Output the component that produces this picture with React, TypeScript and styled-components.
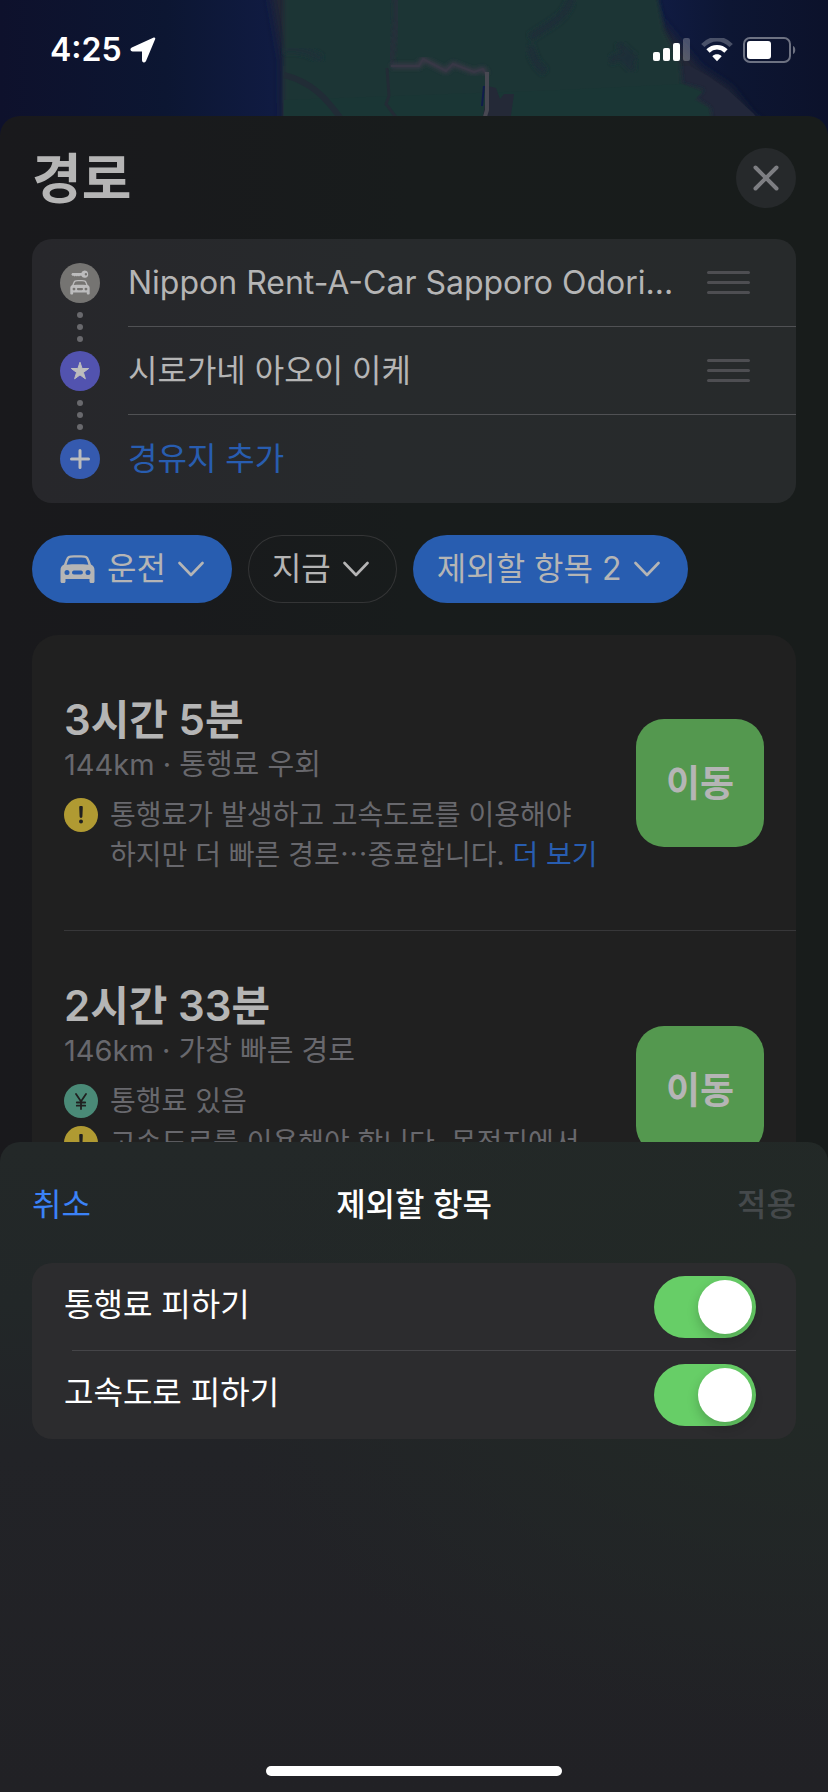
import React, { useId, useState } from "react";
import styled, { createGlobalStyle } from "styled-components";

const GlobalStyle = createGlobalStyle`
  *, *::before, *::after { box-sizing: border-box; }
  html, body { margin: 0; background: #19191c; }
  body, button, input {
    font-family: Inter, "Noto Sans CJK KR", sans-serif;
    -webkit-font-smoothing: antialiased;
  }
  h1, h2, h3, p, ul, ol { margin: 0; padding: 0; }
  ul, ol { list-style: none; }
  button { border: 0; padding: 0; background: none; color: inherit; cursor: pointer; }
`;

const Screen = styled.div`
  position: relative;
  display: flex;
  flex-direction: column;
  height: 100vh;
  min-height: 1200px;
  overflow: hidden;
  background: #0d132e;
`;

const MapLayer = styled.div`
  position: absolute;
  inset: 0 0 auto 0;
  height: 150px;
  svg { display: block; width: 100%; height: 100%; }
`;

const StatusBar = styled.header`
  position: relative;
  flex: none;
  display: flex;
  align-items: center;
  justify-content: space-between;
  height: 116px;
  padding: 0 32px 16px 50px;
  color: #fff;
`;

const Clock = styled.div`
  display: flex;
  align-items: center;
  gap: 8px;
  font-size: 32px;
  font-weight: 600;
  line-height: 40px;
`;

const StatusIcons = styled.div`
  display: flex;
  align-items: center;
  gap: 10px;
`;

const RouteSheet = styled.main`
  position: relative;
  flex: 1;
  display: flex;
  flex-direction: column;
  min-height: 0;
  overflow: hidden;
  padding: 0 32px;
  border-radius: 20px 20px 0 0;
  background: linear-gradient(90deg, #19191c 0%, #191a1c 20%, #181c1c 50%, #181c1b 100%);
`;

const SheetHead = styled.div`
  flex: none;
  display: flex;
  align-items: center;
  justify-content: space-between;
  height: 123px;
`;

const PageTitle = styled.h1`
  padding-top: 4px;
  color: #b5b5b5;
  font-size: 54px;
  font-weight: 700;
  line-height: 64px;
`;

const CloseButton = styled.button`
  display: grid;
  place-items: center;
  width: 60px;
  height: 60px;
  border-radius: 50%;
  background: #26292b;
  color: #7d7e82;
`;

const StopList = styled.ol`
  flex: none;
  overflow: hidden;
  border-radius: 20px;
  background: linear-gradient(90deg, #27272b 0%, #272a2c 45%, #272a2b 100%);
`;

const StopRow = styled.li`
  display: flex;
  align-items: center;
  height: 88px;
  padding-left: 28px;
`;

const StopMarker = styled.div`
  position: relative;
  flex: none;
  display: grid;
  place-items: center;
  width: 40px;
  height: 40px;
  margin-right: 28px;
`;

const StopDisc = styled.div<{ $fill: string }>`
  display: grid;
  place-items: center;
  width: 40px;
  height: 40px;
  border-radius: 50%;
  background: ${(p) => p.$fill};
  color: #bcbcbd;
`;

const Dots = styled.div`
  position: absolute;
  top: 49px;
  left: 17px;
  display: grid;
  gap: 6px;
  span { width: 6px; height: 6px; border-radius: 50%; background: #69696d; }
`;

const StopBody = styled.div<{ $divided: boolean }>`
  flex: 1;
  min-width: 0;
  display: flex;
  align-items: center;
  height: 88px;
  gap: 28px;
  padding-right: 46px;
  border-bottom: ${(p) => (p.$divided ? "1px solid #505154" : "0")};
`;

const StopName = styled.span`
  flex: 1;
  min-width: 0;
  overflow: hidden;
  white-space: nowrap;
  text-overflow: ellipsis;
  color: #b5b5b5;
  font-size: 32px;
  line-height: 44px;
`;

const AddStop = styled.button`
  color: #285db0;
  font-size: 32px;
  line-height: 44px;
`;

const DragHandle = styled.button`
  flex: none;
  display: grid;
  gap: 7px;
  width: 43px;
  span { height: 3px; border-radius: 2px; background: #4e4e52; }
`;

const Chips = styled.div`
  flex: none;
  display: flex;
  gap: 16px;
  padding: 32px 0;
`;

const Chip = styled.button<{ $filled?: boolean; $icon?: boolean }>`
  display: flex;
  align-items: center;
  gap: 12px;
  height: 68px;
  padding: 0 28px 0 ${(p) => (p.$icon ? 28 : 24)}px;
  border-radius: 34px;
  background: ${(p) => (p.$filled ? "#285db0" : "transparent")};
  box-shadow: ${(p) => (p.$filled ? "none" : "inset 0 0 0 1px #343536")};
  color: #b5b5b5;
  font-size: 32px;
  line-height: 44px;
  white-space: nowrap;
`;

const RouteList = styled.ul`
  flex: none;
  border-radius: 26px;
  background: #202020;
`;

const RouteRow = styled.li`
  margin-left: 32px;
  min-height: 295px;
  display: flex;
  align-items: center;
  gap: 20px;
  padding: 46px 32px 46px 0;
  & + & { border-top: 1px solid #373739; }
`;

const RouteInfo = styled.div`
  flex: 1;
  min-width: 0;
  padding-top: 4px;
`;

const Duration = styled.h2`
  color: #b5b5b5;
  font-size: 42px;
  font-weight: 600;
  line-height: 50px;
`;

const Summary = styled.p`
  color: #68686d;
  font-size: 29px;
  line-height: 40px;
`;

const Notices = styled.ul`
  display: grid;
  gap: 2px;
  padding-top: 10px;
`;

const Notice = styled.li`
  display: flex;
  gap: 12px;
  color: #68686d;
  font-size: 28px;
  line-height: 40px;
  word-break: keep-all;
`;

const NoticeText = styled.p`
  white-space: pre-line;
`;

const NoticeDisc = styled.span<{ $fill: string }>`
  flex: none;
  display: grid;
  place-items: center;
  width: 34px;
  height: 34px;
  margin-top: 3px;
  border-radius: 50%;
  background: ${(p) => p.$fill};
`;

const MoreLink = styled.a`
  color: #285db0;
  text-decoration: none;
`;

const GoButton = styled.button`
  flex: none;
  width: 128px;
  height: 128px;
  padding-bottom: 4px;
  border-radius: 28px;
  background: #54984f;
  color: #b5b5b5;
  font-size: 37px;
  font-weight: 700;
`;

const OptionsSheet = styled.section`
  position: absolute;
  inset: auto 0 0 0;
  display: flex;
  flex-direction: column;
  min-height: 650px;
  padding: 0 32px 16px;
  border-radius: 20px 20px 0 0;
  background:
    radial-gradient(ellipse 75% 60% at 100% 30%, rgba(34, 41, 38, 1) 20%, rgba(34, 38, 40, 0) 100%),
    linear-gradient(180deg, #232828 0%, #222728 25%, #222327 48%, #212125 100%);
`;

const OptionsHead = styled.div`
  display: grid;
  grid-template-columns: 1fr auto 1fr;
  align-items: center;
  height: 121px;
  padding-top: 4px;
`;

const OptionsTitle = styled.h2`
  color: #fff;
  font-size: 32px;
  font-weight: 500;
  line-height: 44px;
`;

const HeadAction = styled.button<{ $end?: boolean }>`
  justify-self: ${(p) => (p.$end ? "end" : "start")};
  color: #3b82f7;
  font-size: 32px;
  line-height: 44px;
  &:disabled { color: #45494b; font-weight: 500; cursor: default; }
`;

const OptionList = styled.div`
  overflow: hidden;
  border-radius: 20px;
  background: #2c2c2e;
`;

const OptionRow = styled.div`
  position: relative;
  display: flex;
  align-items: center;
  justify-content: space-between;
  height: 88px;
  padding: 0 40px 0 32px;
  & + &::before {
    content: "";
    position: absolute;
    inset: -1px 0 auto 40px;
    height: 1px;
    background: #454548;
  }
`;

const OptionLabel = styled.label`
  padding-bottom: 4px;
  color: #fff;
  font-size: 32px;
  line-height: 44px;
`;

const Switch = styled.input`
  appearance: none;
  display: flex;
  align-items: center;
  width: 102px;
  height: 62px;
  margin: 0;
  padding: 4px;
  border-radius: 31px;
  background: #39393d;
  cursor: pointer;
  &::before {
    content: "";
    width: 54px;
    height: 54px;
    border-radius: 50%;
    background: #fff;
    box-shadow: 0 5px 12px rgba(0, 0, 0, 0.2);
  }
  &:checked { justify-content: flex-end; background: #67ce67; }
`;

const HomeBar = styled.div`
  align-self: center;
  width: 296px;
  height: 10px;
  margin-top: auto;
  border-radius: 5px;
  background: #fff;
`;

const MapArt = () => (
  <svg viewBox="0 0 828 150" preserveAspectRatio="xMidYMin slice" aria-hidden="true">
    <defs>
      <linearGradient id="sea" x1="0" x2="1" y1="0" y2="0">
        <stop offset="0" stopColor="#0e112c" />
        <stop offset="0.2" stopColor="#0c1632" />
        <stop offset="0.33" stopColor="#101b42" />
        <stop offset="0.8" stopColor="#101b42" />
        <stop offset="0.88" stopColor="#0d1633" />
        <stop offset="1" stopColor="#0c122b" />
      </linearGradient>
      <filter id="soft" x="-10%" y="-10%" width="120%" height="120%"><feGaussianBlur stdDeviation="5" /></filter>
      <filter id="soft2"><feGaussianBlur stdDeviation="2" /></filter>
    </defs>
    <rect width="828" height="150" fill="url(#sea)" />
    <path d="M268-20 282 60 283 150H800L752 116 730 88 700 68 660 20 645-20Z" fill="#222636" filter="url(#soft)" />
    <path d="M283 66V150H775L754 114 728 90 708 76 690 66Z" fill="#22273a" />
    <path d="M284-20V150H716L710 108 695 98 704 90 682 84 680 62 664 30 655-20Z" fill="#1a3635" filter="url(#soft2)" />
    <path d="M284 100V150H716L708 108 694 100 702 92 682 84 560 90Z" fill="#1a3635" />
    <path d="M284 75C312 82 326 98 342 120" fill="none" stroke="#212c36" strokeWidth="6" />
    <path d="M284 50C300 48 312 52 322 60" fill="none" stroke="#1e3038" strokeWidth="8" filter="url(#soft2)" />
    <path d="M530 46C534 60 536 64 545 72M530 38C548 24 566 20 572-4" fill="none" stroke="#1f2f37" strokeWidth="8" filter="url(#soft2)" />
    <path d="M610 62C620 52 622 58 634 70M618 44 636 60" fill="none" stroke="#1f2e37" strokeWidth="8" filter="url(#soft2)" />
    <path d="M396-4C400 20 392 42 391 66" fill="none" stroke="#252e3a" strokeWidth="6" filter="url(#soft2)" />
    <path d="M488 86 496 88 500 99 504 94 514 94 510 122H482Z" fill="#242937" />
    <path d="M387 68 389 96 386 104 398 120" fill="none" stroke="#232c36" strokeWidth="3" />
    <path d="M391 66H419L423 59 446 71 453 64 474 72 483 69 487 74" fill="none" stroke="#3a3947" strokeWidth="5" strokeLinejoin="round" filter="url(#soft2)" />
    <path d="M391 66H419L423 59 446 71 453 64 474 72 483 69 487 76" fill="none" stroke="#383846" strokeWidth="2" strokeLinejoin="round" />
    <path d="M487 72V110L484 120" fill="none" stroke="#484852" strokeWidth="4" />
    <path d="M484 86 482 106" stroke="#101c4c" strokeWidth="2" />
  </svg>
);

const LocationArrow = () => (
  <svg width="26" height="26" viewBox="0 0 26 26" aria-hidden="true">
    <path d="M24.200 1.600 15 23.600c-.5 1.200-1.900.9-1.900-.4V13.400H2.600c-1.300 0-1.500-1.400-.3-2L24.200 1.600Z" fill="#fff" stroke="#fff" strokeWidth="2.200" strokeLinejoin="round" />
  </svg>
);

const Signal = () => (
  <svg width="38" height="24" viewBox="0 0 38 24" aria-hidden="true">
    <rect x="0" y="14" width="7" height="9" rx="2" fill="#fff" />
    <rect x="10" y="10" width="7" height="13" rx="2" fill="#fff" />
    <rect x="20" y="5" width="7" height="18" rx="2" fill="#fff" />
    <rect x="30" y="0" width="7" height="23" rx="2" fill="#fff" opacity="0.250" />
  </svg>
);

const Wifi = () => (
  <svg width="32" height="24" viewBox="0 0 32 24" aria-hidden="true" fill="none">
    <path d="M1.800 7.500C10-1 22-1 30.200 7.500" stroke="#fff" strokeOpacity="0.250" strokeWidth="4.600" />
    <path d="M7 13C12 8 20 8 25 13" stroke="#fff" strokeWidth="4.600" />
    <path d="M11.300 18.200C14 15.700 18 15.700 20.700 18.200L16 23.200Z" fill="#fff" />
  </svg>
);

const Battery = () => (
  <svg width="53" height="26" viewBox="0 0 53 26" aria-hidden="true">
    <rect x="1" y="1" width="46" height="24" rx="6" fill="none" stroke="#fff" strokeOpacity="0.400" strokeWidth="2" />
    <rect x="4" y="4" width="24" height="18" rx="3" fill="#fff" />
    <path d="M50 9c3 1 3 7 0 8Z" fill="#fff" opacity="0.400" />
  </svg>
);

const CloseIcon = () => (
  <svg width="26" height="26" viewBox="0 0 26 26" aria-hidden="true">
    <path d="M2.500 2.500 23.500 23.500M23.500 2.500 2.500 23.500" stroke="currentColor" strokeWidth="4" strokeLinecap="round" />
  </svg>
);

const CarBody = () => (
  <path
    fillRule="evenodd"
    d="M6.800 2.600C7.600 1.200 8.800.6 10.500.5 15 .1 20 .1 24.500.5 26.200.6 27.400 1.200 28.200 2.600 29.200 4.600 30.200 7 31 9.600 33.400 10.600 34.500 12.400 34.500 15.500V26.600c0 .9-.6 1.500-1.500 1.500h-2c-.9 0-1.500-.6-1.500-1.500V24H5.500V26.600c0 .9-.6 1.500-1.500 1.500H2C1.100 28.100.5 27.500.5 26.600V15.500C.5 12.400 1.600 10.600 4 9.600 4.800 7 5.800 4.600 6.800 2.600ZM6.600 9.800C13 9.200 22 9.200 28.400 9.800 27.800 7.600 27.200 5.800 26.400 4.200 26 3.300 25.400 2.900 24.400 2.800 20 2.400 15 2.400 10.600 2.800 9.600 2.900 9 3.300 8.600 4.200 7.800 5.800 7.200 7.600 6.600 9.800ZM7 15a2.500 2.500 0 1 0 0 5 2.500 2.500 0 0 0 0-5ZM28 15a2.500 2.500 0 1 0 0 5 2.500 2.500 0 0 0 0-5ZM14 15.500c-2.600 0-2.600 4 0 4h7c2.600 0 2.600-4 0-4Z"
    fill="currentColor"
  />
);

const CarIcon = () => (
  <svg width="35" height="29" viewBox="0 0 35 29" aria-hidden="true">
    <CarBody />
  </svg>
);

const RentalCarIcon = () => (
  <svg width="22" height="26" viewBox="0 0 22 26" aria-hidden="true">
    <g transform="translate(1 10) scale(0.570 0.520)"><CarBody /></g>
    <path fillRule="evenodd" d="M15.500.6a3.600 3.600 0 1 1-3.200 5.100H11l-1 .9-1.100-.9-1 .9-1.100-.9-1 .9L4.600 5.700H3.200L2.300 4.300 3.300 3h9A3.600 3.600 0 0 1 15.500.6Zm1.400 2.500a1.200 1.200 0 1 0 0 2.400 1.200 1.200 0 0 0 0-2.400Z" fill="currentColor" />
  </svg>
);

const StarIcon = () => (
  <svg width="20" height="20" viewBox="0 0 20 20" aria-hidden="true">
    <path d="M10 1.200 12.100 7.500H18.700L13.400 11.400 15.400 17.800 10 13.900 4.600 17.800 6.600 11.400 1.300 7.500H7.900Z" fill="currentColor" stroke="currentColor" strokeLinejoin="round" />
  </svg>
);

const PlusIcon = () => (
  <svg width="20" height="20" viewBox="0 0 20 20" aria-hidden="true">
    <path d="M10 1.500V18.500M1.500 10H18.500" stroke="currentColor" strokeWidth="3" strokeLinecap="round" />
  </svg>
);

const Chevron = () => (
  <svg width="26" height="16" viewBox="0 0 26 16" aria-hidden="true">
    <path d="M1.500 2 13 14 24.500 2" fill="none" stroke="currentColor" strokeWidth="2.600" strokeLinecap="round" strokeLinejoin="round" />
  </svg>
);

const AlertGlyph = () => (
  <svg width="6" height="18" viewBox="0 0 6 18" aria-hidden="true">
    <path d="M1.200 1.500a1.800 1.800 0 0 1 3.600 0L4.400 10.500a1.400 1.400 0 0 1-2.800 0Z" fill="#202020" />
    <circle cx="3" cy="15.600" r="2" fill="#202020" />
  </svg>
);

const YenGlyph = () => (
  <svg width="14" height="17" viewBox="0 0 14 17" aria-hidden="true">
    <path d="M2 1 7 8.500 12 1M7 8.500V16M2.800 9.500H11.200M2.800 12.700H11.200" fill="none" stroke="#202020" strokeWidth="1.800" strokeLinecap="round" />
  </svg>
);

const Handle = () => (
  <DragHandle type="button" aria-label="순서 변경">
    <span />
    <span />
    <span />
  </DragHandle>
);

const Connector = () => (
  <Dots aria-hidden="true">
    <span />
    <span />
    <span />
  </Dots>
);

function OptionSwitch({ label }: { label: string }) {
  const id = useId();
  const [on, setOn] = useState(true);
  return (
    <OptionRow>
      <OptionLabel htmlFor={id}>{label}</OptionLabel>
      <Switch id={id} type="checkbox" role="switch" checked={on} onChange={(e) => setOn(e.target.checked)} />
    </OptionRow>
  );
}

export default function App() {
  return (
    <Screen>
      <GlobalStyle />
      <MapLayer>
        <MapArt />
      </MapLayer>
      <StatusBar>
        <Clock>
          4:25
          <LocationArrow />
        </Clock>
        <StatusIcons>
          <Signal />
          <Wifi />
          <Battery />
        </StatusIcons>
      </StatusBar>

      <RouteSheet>
        <SheetHead>
          <PageTitle>경로</PageTitle>
          <CloseButton type="button" aria-label="닫기">
            <CloseIcon />
          </CloseButton>
        </SheetHead>

        <StopList>
          <StopRow>
            <StopMarker>
              <StopDisc $fill="#757472"><RentalCarIcon /></StopDisc>
              <Connector />
            </StopMarker>
            <StopBody $divided>
              <StopName>Nippon Rent-A-Car Sapporo Odori...</StopName>
              <Handle />
            </StopBody>
          </StopRow>
          <StopRow>
            <StopMarker>
              <StopDisc $fill="#5253af"><StarIcon /></StopDisc>
              <Connector />
            </StopMarker>
            <StopBody $divided>
              <StopName>시로가네 아오이 이케</StopName>
              <Handle />
            </StopBody>
          </StopRow>
          <StopRow>
            <StopMarker>
              <StopDisc $fill="#355aaf"><PlusIcon /></StopDisc>
            </StopMarker>
            <StopBody $divided={false}>
              <AddStop type="button">경유지 추가</AddStop>
            </StopBody>
          </StopRow>
        </StopList>

        <Chips>
          <Chip type="button" $filled $icon aria-haspopup="menu">
            <CarIcon />
            운전
            <Chevron />
          </Chip>
          <Chip type="button" aria-haspopup="menu">
            지금
            <Chevron />
          </Chip>
          <Chip type="button" $filled aria-haspopup="dialog">
            제외할 항목 2
            <Chevron />
          </Chip>
        </Chips>

        <RouteList>
          <RouteRow>
            <RouteInfo>
              <Duration>3시간 5분</Duration>
              <Summary>144km · 통행료 우회</Summary>
              <Notices>
                <Notice>
                  <NoticeDisc $fill="#b09a32"><AlertGlyph /></NoticeDisc>
                  <NoticeText>
                    {"통행료가 발생하고 고속도로를 이용해야\n하지만 더 빠른 경로⋯종료합니다. "}
                    <MoreLink href="#more">더 보기</MoreLink>
                  </NoticeText>
                </Notice>
              </Notices>
            </RouteInfo>
            <GoButton type="button">이동</GoButton>
          </RouteRow>
          <RouteRow>
            <RouteInfo>
              <Duration>2시간 33분</Duration>
              <Summary>146km · 가장 빠른 경로</Summary>
              <Notices>
                <Notice>
                  <NoticeDisc $fill="#4a8a77"><YenGlyph /></NoticeDisc>
                  <NoticeText>통행료 있음</NoticeText>
                </Notice>
                <Notice>
                  <NoticeDisc $fill="#b09a32"><AlertGlyph /></NoticeDisc>
                  <NoticeText>{"고속도로를 이용해야 합니다. 목적지에서\n종료합니다."}</NoticeText>
                </Notice>
              </Notices>
            </RouteInfo>
            <GoButton type="button">이동</GoButton>
          </RouteRow>
        </RouteList>
      </RouteSheet>

      <OptionsSheet role="dialog" aria-labelledby="options-title">
        <OptionsHead>
          <HeadAction type="button">취소</HeadAction>
          <OptionsTitle id="options-title">제외할 항목</OptionsTitle>
          <HeadAction type="button" $end disabled>적용</HeadAction>
        </OptionsHead>
        <OptionList>
          <OptionSwitch label="통행료 피하기" />
          <OptionSwitch label="고속도로 피하기" />
        </OptionList>
        <HomeBar />
      </OptionsSheet>
    </Screen>
  );
}
